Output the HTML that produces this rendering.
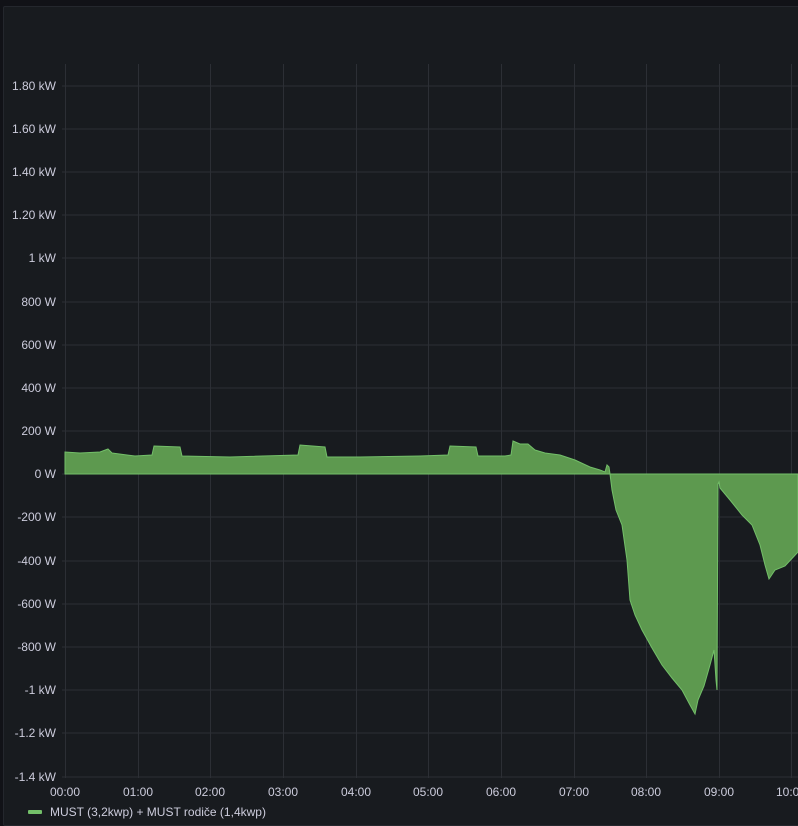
<!DOCTYPE html>
<html><head><style>
html,body{margin:0;padding:0;background:#111217;width:798px;height:824px;overflow:hidden;font-family:"Liberation Sans",sans-serif}
.panel{position:absolute;left:3px;top:6px;width:800px;height:818px;background:#181b1f;border:1px solid #24272d;border-radius:2px}
svg{position:absolute;left:0;top:0}
text{font-family:"Liberation Sans",sans-serif;font-size:12px;fill:#ccccdc}
</style></head><body>
<div class="panel"></div>
<svg width="798" height="824">
<g stroke="#2c2f35" stroke-width="1">
<line x1="62" y1="86" x2="798" y2="86"/><line x1="62" y1="129" x2="798" y2="129"/><line x1="62" y1="172" x2="798" y2="172"/><line x1="62" y1="215" x2="798" y2="215"/><line x1="62" y1="258" x2="798" y2="258"/><line x1="62" y1="302" x2="798" y2="302"/><line x1="62" y1="345" x2="798" y2="345"/><line x1="62" y1="388" x2="798" y2="388"/><line x1="62" y1="431" x2="798" y2="431"/><line x1="62" y1="474" x2="798" y2="474"/><line x1="62" y1="517" x2="798" y2="517"/><line x1="62" y1="561" x2="798" y2="561"/><line x1="62" y1="604" x2="798" y2="604"/><line x1="62" y1="647" x2="798" y2="647"/><line x1="62" y1="690" x2="798" y2="690"/><line x1="62" y1="733" x2="798" y2="733"/><line x1="62" y1="777" x2="798" y2="777"/>
<line x1="65.5" y1="64" x2="65.5" y2="778"/><line x1="138.5" y1="64" x2="138.5" y2="778"/><line x1="210.5" y1="64" x2="210.5" y2="778"/><line x1="283.5" y1="64" x2="283.5" y2="778"/><line x1="356.5" y1="64" x2="356.5" y2="778"/><line x1="428.5" y1="64" x2="428.5" y2="778"/><line x1="501.5" y1="64" x2="501.5" y2="778"/><line x1="574.5" y1="64" x2="574.5" y2="778"/><line x1="646.5" y1="64" x2="646.5" y2="778"/><line x1="719.5" y1="64" x2="719.5" y2="778"/><line x1="791.5" y1="64" x2="791.5" y2="778"/>
</g>
<path d="M65,474 L65,452 L80,453 L100,452 L108,449 L112,453 L135,456 L152,455 L154,446 L180,447 L182,456 L230,457 L298,455 L300,445 L325,447 L327,457 L360,457 L420,456 L448,455 L450,446 L476,447 L478,456 L505,456 L511,455 L513,441 L520,444 L528,444 L535,450 L545,453 L560,455 L575,460 L590,467 L600,470 L605,472 L607,465 L609,467 L610,474 L612,490 L616,510 L622,525 L627,560 L630,600 L635,615 L642,630 L652,648 L662,665 L672,678 L682,690 L690,705 L695,714 L698,700 L704,686 L710,665 L714,650 L716,680 L717,690 L718,484 L719,482 L720,488 L730,500 L742,515 L752,525 L760,545 L765,565 L769,579 L775,570 L785,566 L798,552 L798,474 Z" fill="#5d994f" stroke="#73bf69" stroke-width="1"/>
<g text-anchor="end">
<text x="56" y="90">1.80 kW</text><text x="56" y="133">1.60 kW</text><text x="56" y="176">1.40 kW</text><text x="56" y="219">1.20 kW</text><text x="56" y="262">1 kW</text><text x="56" y="306">800 W</text><text x="56" y="349">600 W</text><text x="56" y="392">400 W</text><text x="56" y="435">200 W</text><text x="56" y="478">0 W</text><text x="56" y="521">-200 W</text><text x="56" y="565">-400 W</text><text x="56" y="608">-600 W</text><text x="56" y="651">-800 W</text><text x="56" y="694">-1 kW</text><text x="56" y="737">-1.2 kW</text><text x="56" y="781">-1.4 kW</text>
</g>
<g text-anchor="middle">
<text x="65" y="796">00:00</text><text x="138" y="796">01:00</text><text x="210" y="796">02:00</text><text x="283" y="796">03:00</text><text x="356" y="796">04:00</text><text x="428" y="796">05:00</text><text x="501" y="796">06:00</text><text x="574" y="796">07:00</text><text x="646" y="796">08:00</text><text x="719" y="796">09:00</text><text x="791" y="796">10:00</text>
</g>
<rect x="28" y="810" width="14" height="4" rx="1" fill="#73bf69"/>
<text x="50" y="816">MUST (3,2kwp) + MUST rodiče (1,4kwp)</text>
</svg>
</body></html>
